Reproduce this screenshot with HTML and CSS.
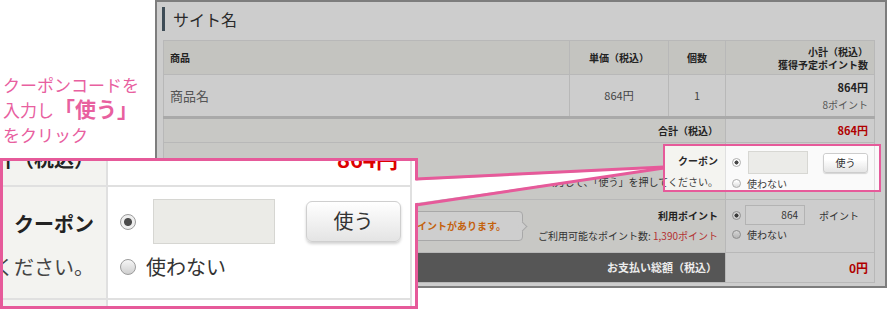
FILE: index.html
```html
<!DOCTYPE html>
<html lang="ja">
<head>
    <meta charset="UTF-8">
    <meta name="viewport" content="width=device-width, initial-scale=1.0">
    <title>クーポン入力</title>
    <link rel="stylesheet" href="styles.css">
</head>
<body>
<div class="stage">
    <div class="note">
        <p>クーポンコードを<br>入力し<strong>「使う」</strong><br>をクリック</p>
    </div>

    <div class="shot">
        <h1 class="site-name">サイト名</h1>
        <table class="cart">
            <colgroup>
                <col class="c-name">
                <col class="c-price">
                <col class="c-qty">
                <col class="c-sub">
            </colgroup>
            <thead>
                <tr>
                    <th class="left">商品</th>
                    <th>単価（税込）</th>
                    <th>個数</th>
                    <th class="right">小計（税込）<br>獲得予定ポイント数</th>
                </tr>
            </thead>
            <tbody>
                <tr class="item">
                    <td class="left name">商品名</td>
                    <td class="center">864円</td>
                    <td class="center">1</td>
                    <td class="right"><b>864円</b><br><span class="earn">8ポイント</span></td>
                </tr>
                <tr class="sum">
                    <th colspan="3" class="lbl">合計（税込）</th>
                    <td class="right price">864円</td>
                </tr>
                <tr class="coupon">
                    <th colspan="3" class="lbl top">
                        クーポン
                        <span class="hint">クーポンコードを入力して、「使う」を押してください。</span>
                    </th>
                    <td class="opt">
                        <div class="opt-line"><span class="radio on"></span><span class="field"></span><span class="btn">使う</span></div>
                        <div class="opt-line"><span class="radio"></span>使わない</div>
                    </td>
                </tr>
                <tr class="points">
                    <th colspan="3" class="lbl">
                        <div class="pt-line">
                            <span class="bubble">ご利用いただけるポイントがあります。</span>
                            <span class="pt-text">利用ポイント<br><span class="avail">ご利用可能なポイント数: <em>1,390ポイント</em></span></span>
                        </div>
                    </th>
                    <td class="opt">
                        <div class="opt-line"><span class="radio on"></span><span class="field num">864</span><span class="unit">ポイント</span></div>
                        <div class="opt-line"><span class="radio"></span>使わない</div>
                    </td>
                </tr>
                <tr class="total">
                    <th colspan="3" class="lbl">お支払い総額（税込）</th>
                    <td class="right price">0円</td>
                </tr>
            </tbody>
        </table>
    </div>

    <div class="spot"></div>

    <div class="callout">
        <table class="zoom-table">
            <tr class="z-sum">
                <th>合計（税込）</th>
                <td class="z-price">864円</td>
            </tr>
            <tr class="z-coupon">
                <th>
                    クーポン
                    <span class="z-hint">クーポンコードを入力して、「使う」を押してください。</span>
                </th>
                <td>
                    <div class="z-line"><span class="z-radio on"></span><span class="z-field"></span><span class="z-btn">使う</span></div>
                    <div class="z-line"><span class="z-radio"></span>使わない</div>
                </td>
            </tr>
            <tr class="z-next">
                <th></th>
                <td></td>
            </tr>
        </table>
    </div>

    <svg class="wedge" width="889" height="311" viewBox="0 0 889 311">
        <polygon points="413,180.5 663,168 413,203.5" fill="#fff"/>
        <line x1="416" y1="179" x2="664" y2="167" stroke="#e65a9a" stroke-width="3"/>
        <line x1="416" y1="205" x2="664" y2="168" stroke="#e65a9a" stroke-width="3"/>
    </svg>
</div>
</body>
</html>
```

FILE: styles.css
```css
* {
    box-sizing: border-box;
}
body {
    margin: 0;
    background: #fff;
    font-family: "Noto Sans CJK JP", "Noto Sans", sans-serif;
    color: #222;
}
.stage {
    position: relative;
    display: flex;
    width: 889px;
    height: 311px;
    overflow: hidden;
}

/* left note */
.note {
    width: 155px;
    flex: none;
    padding: 72px 0 0 3px;
    color: #e8609f;
    font-size: 17px;
    line-height: 25px;
}
.note p {
    margin: 0;
}
.note strong {
    font-size: 21px;
    line-height: 1;
}

/* dimmed screenshot */
.shot {
    width: 732px;
    height: 288px;
    flex: none;
    border: 2px solid #7d7d7d;
    background: #cdcdcd;
}
.site-name {
    margin: 5px 0 9px 5px;
    padding-left: 8px;
    border-left: 3px solid #3e4c56;
    font-size: 16px;
    font-weight: normal;
    line-height: 24px;
    color: #2a2a2a;
}
.cart {
    margin-left: 6px;
    width: 711px;
    border-collapse: collapse;
    table-layout: fixed;
    font-size: 10px;
    line-height: 13px;
}
.c-name { width: 406px; }
.c-price { width: 99px; }
.c-qty { width: 57px; }
.c-sub { width: 149px; }
.cart th,
.cart td {
    border: 1px solid #b8b8b8;
    padding: 0 6px;
}
.cart thead th {
    height: 34px;
    background: #c4c4c0;
    font-weight: bold;
    text-align: center;
    color: #222;
}
.left { text-align: left !important; }
.right { text-align: right !important; }
.center { text-align: center; }

.item td {
    height: 43px;
    border-bottom: 3px solid #a9a9a9;
    color: #444;
    font-size: 11px;
    line-height: 17px;
}
.item .name {
    font-size: 13px;
    color: #555;
}
.item b {
    color: #222;
}
.earn {
    font-size: 10px;
    color: #555;
}

.lbl {
    background: #c8c8c5;
    text-align: right;
    font-weight: bold;
    color: #222;
    padding-right: 7px !important;
}
.price {
    color: #b00000;
    font-weight: bold;
    font-size: 11px;
}
.sum th,
.sum td {
    height: 25px;
}

.coupon th,
.coupon td {
    height: 57px;
    vertical-align: top;
}
.coupon .lbl {
    padding-top: 9px;
    line-height: 18px;
}
.hint {
    display: block;
    margin-top: 3px;
    font-weight: normal;
    color: #333;
    white-space: nowrap;
}
.opt {
    padding: 8px 6px 0 !important;
    color: #333;
}
.opt-line {
    display: flex;
    align-items: center;
    min-height: 18px;
}
.radio {
    width: 9px;
    height: 9px;
    flex: none;
    margin-right: 6px;
    border: 1px solid #8e8e8e;
    border-radius: 50%;
    background: linear-gradient(#d6d6d6, #b4b4b4);
}
.radio.on {
    background: radial-gradient(circle, #3a3a3a 0 1.8px, #d2d2d2 2.3px);
}
.field {
    width: 60px;
    height: 23px;
    margin-left: 1px;
    background: #c1c1be;
    border: 1px solid #b0b0ad;
}
.btn {
    margin-left: 15px;
    width: 45px;
    height: 20px;
    border: 1px solid #a8a8a8;
    border-radius: 3px;
    background: linear-gradient(#dadada, #bcbcbc);
    box-shadow: 0 1px 1px rgba(0, 0, 0, 0.15);
    text-align: center;
    line-height: 18px;
    color: #222;
}

.points th,
.points td {
    height: 53px;
}
.points .opt {
    padding-top: 5px !important;
    vertical-align: top;
}
.field.num {
    width: 60px;
    height: 20px;
    margin-left: -2px;
    background: #cfcfcf;
    border-color: #b3b3b3;
    text-align: right;
    padding-right: 6px;
    line-height: 18px;
}
.unit {
    margin-left: 14px;
}
.pt-line {
    display: flex;
    justify-content: flex-end;
    align-items: center;
    gap: 15px;
}
.bubble {
    position: relative;
    height: 30px;
    padding: 0 16px 0 12px;
    border: 1px solid #a8a8a8;
    border-radius: 4px;
    background: #cecece;
    color: #c4620e;
    font-weight: bold;
    line-height: 28px;
    white-space: nowrap;
}
.bubble::after {
    content: "";
    position: absolute;
    right: -4px;
    top: 11px;
    width: 6px;
    height: 6px;
    border-top: 1px solid #a8a8a8;
    border-right: 1px solid #a8a8a8;
    background: #cecece;
    transform: rotate(45deg);
}
.pt-text {
    line-height: 20px;
    white-space: nowrap;
}
.avail {
    font-weight: normal;
    color: #333;
}
.avail em {
    font-style: normal;
    color: #b43232;
}

.total th,
.total td {
    height: 30px;
}
.total .lbl {
    background: #565656;
    color: #ececec;
    font-size: 11px;
    padding-right: 8px !important;
}
.total .price {
    font-size: 12px;
}

/* highlight on the coupon field */
.spot {
    position: absolute;
    left: 663px;
    top: 144px;
    width: 218px;
    height: 48px;
    border: 2px solid #e65a9a;
    backdrop-filter: brightness(1.22);
}

/* magnified callout */
.callout {
    position: absolute;
    left: 0;
    top: 158px;
    width: 418px;
    height: 151px;
    border: 3px solid #e65a9a;
    background: #fff;
    overflow: hidden;
}
.zoom-table {
    margin: -26px 0 0 -497px;
    width: 906px;
    border-collapse: collapse;
    table-layout: fixed;
}
.zoom-table th,
.zoom-table td {
    border: 2px solid #e0e0e0;
    padding: 0;
}
.zoom-table th {
    width: 600px;
    padding-right: 12px;
    background: #f3f3f0;
    text-align: right;
    font-size: 20px;
    color: #222;
    white-space: nowrap;
}
.z-sum th,
.z-sum td {
    height: 50px;
    padding-bottom: 6px;
}
.z-price {
    text-align: right;
    padding-right: 12px !important;
    color: #d00;
    font-weight: bold;
    font-size: 22px;
}
.z-coupon th,
.z-coupon td {
    height: 113px;
    vertical-align: top;
}
.z-coupon th {
    padding-top: 19px;
    line-height: 36px;
}
.z-hint {
    display: block;
    margin-top: 7px;
    font-weight: normal;
    color: #444;
}
.z-coupon td {
    padding: 12px 0 0 12px;
    color: #333;
    font-size: 20px;
}
.z-line {
    display: flex;
    align-items: center;
}
.z-line + .z-line {
    margin-top: 5px;
    line-height: 36px;
}
.z-radio {
    width: 16px;
    height: 16px;
    flex: none;
    margin-right: 10px;
    border: 1px solid #9c9c9c;
    border-radius: 50%;
    background: linear-gradient(#f6f6f6, #cfcfcf);
}
.z-radio.on {
    margin-right: 17px;
    background: radial-gradient(circle, #4a4a4a 0 3.5px, #eeeeee 4.5px);
}
.z-field {
    width: 122px;
    height: 45px;
    background: #ebebe7;
    border: 1px solid #d6d6d2;
}
.z-btn {
    margin-left: 31px;
    width: 95px;
    height: 41px;
    border: 1px solid #cfcfcf;
    border-radius: 6px;
    background: linear-gradient(#ffffff, #e4e4e4);
    box-shadow: 0 2px 3px rgba(0, 0, 0, 0.18);
    text-align: center;
    line-height: 38px;
    color: #333;
}
.z-next th,
.z-next td {
    height: 50px;
}

.wedge {
    position: absolute;
    left: 0;
    top: 0;
    pointer-events: none;
}
```
